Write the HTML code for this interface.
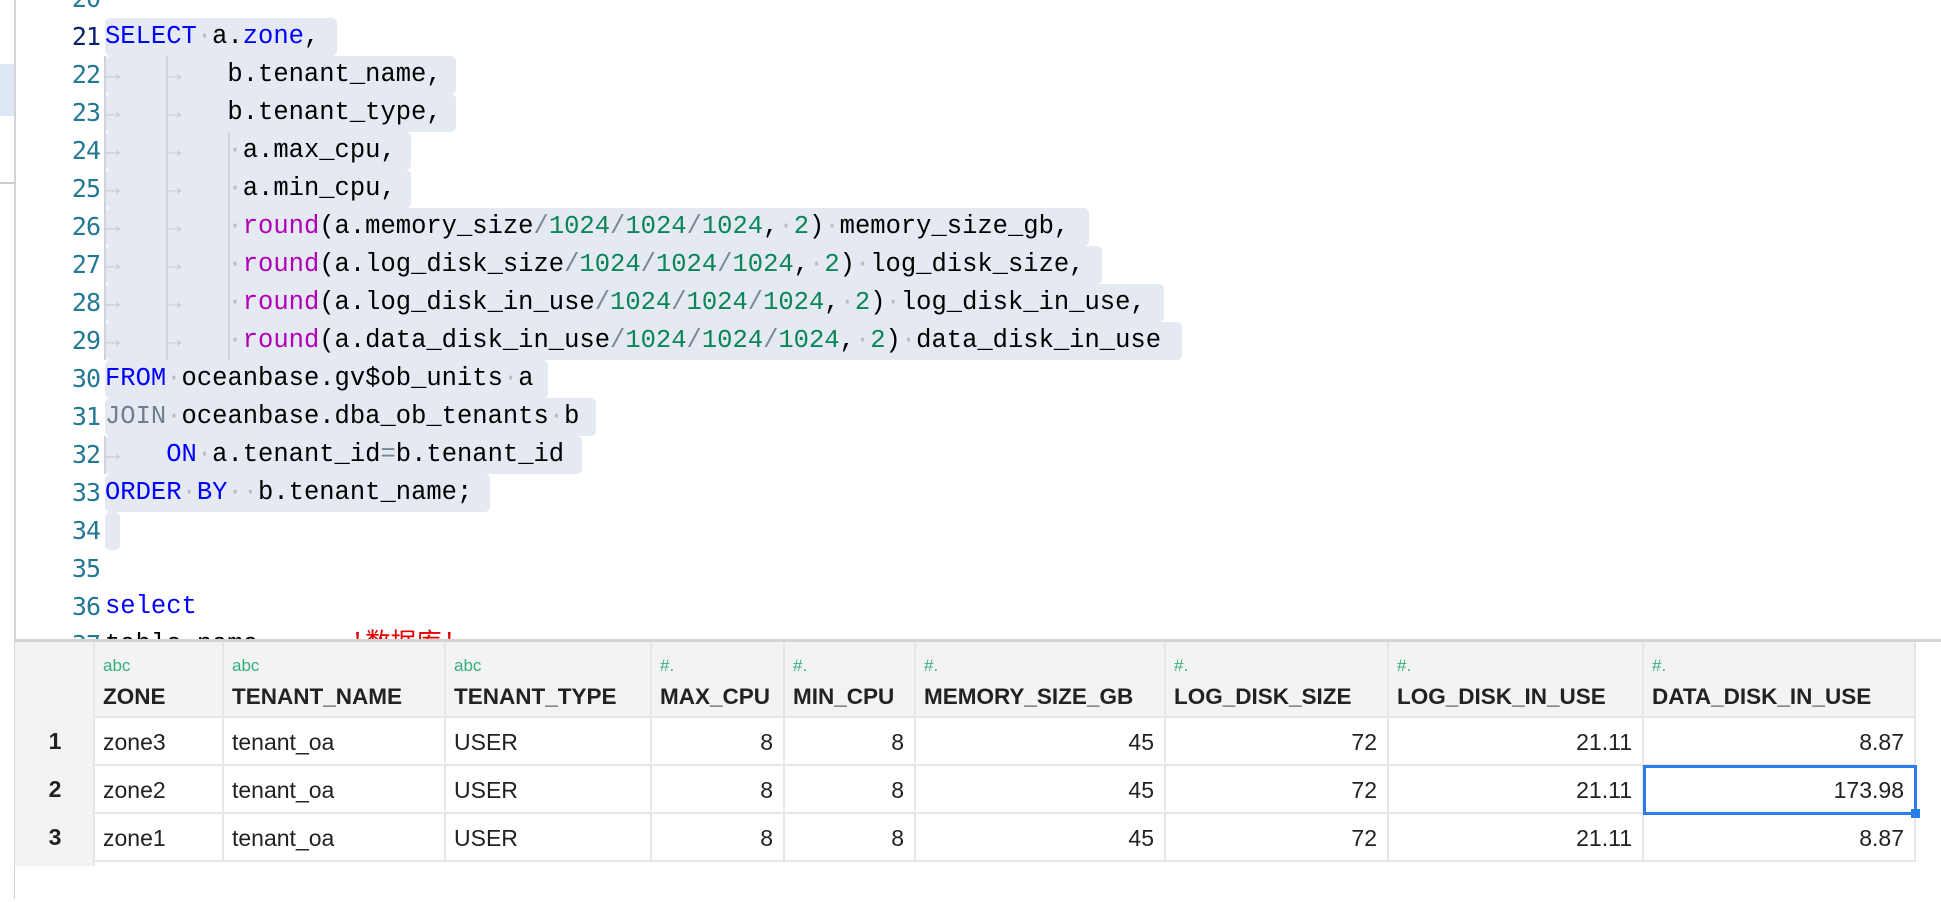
<!DOCTYPE html>
<html><head><meta charset="utf-8">
<style>
body{margin:0;width:1941px;height:899px;overflow:hidden;background:#fff;position:relative;font-family:"Liberation Sans",sans-serif}
.ln{position:absolute;left:40px;width:60px;text-align:right;font:25px/38px "DejaVu Sans Mono","Liberation Mono",monospace;color:#237893;letter-spacing:-1px}
.cl{position:absolute;left:105px;height:38px;font:25.5px/38px "Liberation Mono","DejaVu Sans Mono",monospace;white-space:pre;color:#000}
.hl{position:absolute;background:#e5e9f1;height:38px;border-radius:5px}
.k{color:#0000ff}.g{color:#708090}.f{color:#b000b8}.n{color:#098658}.o{color:#778899}.w{color:#b8bcc4}.t{color:#c8ccd2}
.guide{position:absolute;width:2px;background:#d0d3d8}
.c{position:absolute;box-sizing:border-box;border-right:2px solid #e6e6e6;border-bottom:2px solid #e6e6e6;font-size:23px;color:#222;overflow:hidden}
.h{background:#f3f3f3}
.ty{position:absolute;left:8px;top:14px;font-size:17px;color:#35b07a}
.hn{position:absolute;left:8px;bottom:6px;font-weight:bold;font-size:22.5px;color:#222;white-space:nowrap}
.v{position:absolute;top:11px;white-space:nowrap}
.r{right:10px}.l{left:8px}
</style></head><body>
<!-- gutter -->
<div style="position:absolute;left:0;top:64px;width:14px;height:52px;background:#dce8f8"></div>
<div style="position:absolute;left:0;top:182px;width:14px;height:2px;background:#ccc"></div>
<div style="position:absolute;left:14px;top:0;width:2px;height:899px;background:#d4d4d4"></div>

<!-- highlights -->
<div class="hl" style="top:18px;left:105px;width:232px"></div>
<div class="hl" style="top:56px;left:105px;width:351px"></div>
<div class="hl" style="top:94px;left:105px;width:351px"></div>
<div class="hl" style="top:132px;left:105px;width:306px"></div>
<div class="hl" style="top:170px;left:105px;width:306px"></div>
<div class="hl" style="top:208px;left:105px;width:984px"></div>
<div class="hl" style="top:246px;left:105px;width:997px"></div>
<div class="hl" style="top:284px;left:105px;width:1059px"></div>
<div class="hl" style="top:322px;left:105px;width:1077px"></div>
<div class="hl" style="top:360px;left:105px;width:443px"></div>
<div class="hl" style="top:398px;left:105px;width:491px"></div>
<div class="hl" style="top:436px;left:105px;width:477px"></div>
<div class="hl" style="top:474px;left:105px;width:385px"></div>
<div class="hl" style="top:512px;left:105px;width:15px"></div>

<div class="guide" style="left:104px;top:56px;height:304px"></div>
<div class="guide" style="left:166px;top:56px;height:304px"></div>
<div class="guide" style="left:228px;top:132px;height:228px"></div>
<div class="guide" style="left:104px;top:436px;height:38px"></div>

<!-- line numbers -->
<div class="ln" style="top:-20px">20</div>
<div class="ln" style="top:18px;color:#0b216f">21</div>
<div class="ln" style="top:56px">22</div>
<div class="ln" style="top:94px">23</div>
<div class="ln" style="top:132px">24</div>
<div class="ln" style="top:170px">25</div>
<div class="ln" style="top:208px">26</div>
<div class="ln" style="top:246px">27</div>
<div class="ln" style="top:284px">28</div>
<div class="ln" style="top:322px">29</div>
<div class="ln" style="top:360px">30</div>
<div class="ln" style="top:398px">31</div>
<div class="ln" style="top:436px">32</div>
<div class="ln" style="top:474px">33</div>
<div class="ln" style="top:512px">34</div>
<div class="ln" style="top:550px">35</div>
<div class="ln" style="top:588px">36</div>
<div class="ln" style="top:626px">37</div>

<!-- code -->
<div class="cl" style="top:18px"><span class="k">SELECT</span><span class="w">·</span>a.<span class="k">zone</span>,</div>
<div class="cl" style="top:56px"><span class="t">→   →   </span>b.tenant_name,</div>
<div class="cl" style="top:94px"><span class="t">→   →   </span>b.tenant_type,</div>
<div class="cl" style="top:132px"><span class="t">→   →   </span><span class="w">·</span>a.max_cpu,</div>
<div class="cl" style="top:170px"><span class="t">→   →   </span><span class="w">·</span>a.min_cpu,</div>
<div class="cl" style="top:208px"><span class="t">→   →   </span><span class="w">·</span><span class="f">round</span>(a.memory_size<span class="o">/</span><span class="n">1024</span><span class="o">/</span><span class="n">1024</span><span class="o">/</span><span class="n">1024</span>,<span class="w">·</span><span class="n">2</span>)<span class="w">·</span>memory_size_gb,</div>
<div class="cl" style="top:246px"><span class="t">→   →   </span><span class="w">·</span><span class="f">round</span>(a.log_disk_size<span class="o">/</span><span class="n">1024</span><span class="o">/</span><span class="n">1024</span><span class="o">/</span><span class="n">1024</span>,<span class="w">·</span><span class="n">2</span>)<span class="w">·</span>log_disk_size,</div>
<div class="cl" style="top:284px"><span class="t">→   →   </span><span class="w">·</span><span class="f">round</span>(a.log_disk_in_use<span class="o">/</span><span class="n">1024</span><span class="o">/</span><span class="n">1024</span><span class="o">/</span><span class="n">1024</span>,<span class="w">·</span><span class="n">2</span>)<span class="w">·</span>log_disk_in_use,</div>
<div class="cl" style="top:322px"><span class="t">→   →   </span><span class="w">·</span><span class="f">round</span>(a.data_disk_in_use<span class="o">/</span><span class="n">1024</span><span class="o">/</span><span class="n">1024</span><span class="o">/</span><span class="n">1024</span>,<span class="w">·</span><span class="n">2</span>)<span class="w">·</span>data_disk_in_use</div>
<div class="cl" style="top:360px"><span class="k">FROM</span><span class="w">·</span>oceanbase.gv$ob_units<span class="w">·</span>a</div>
<div class="cl" style="top:398px"><span class="g">JOIN</span><span class="w">·</span>oceanbase.dba_ob_tenants<span class="w">·</span>b</div>
<div class="cl" style="top:436px"><span class="t">→   </span><span class="k">ON</span><span class="w">·</span>a.tenant_id<span class="o">=</span>b.tenant_id</div>
<div class="cl" style="top:474px"><span class="k">ORDER</span><span class="w">·</span><span class="k">BY</span><span class="w">··</span>b.tenant_name;</div>
<div class="cl" style="top:588px"><span class="k">select</span></div>
<div class="cl" style="top:626px">table_name<span>      </span><span style="color:#e00000;font-family:'Liberation Mono','Noto Sans CJK SC',monospace">'数据库'</span></div>

<!-- table -->
<div style="position:absolute;left:15px;top:639px;width:1926px;height:260px;background:#fff;border-top:3px solid #d4d4d4"></div>
<div style="position:absolute;left:15px;top:642px">
<div class="c h" style="left:0;top:0;width:80px;height:224px;border-bottom:none"></div>
<div class="c h" style="left:80px;top:0;width:129px;height:76px"><span class="ty">abc</span><span class="hn">ZONE</span></div>
<div class="c h" style="left:209px;top:0;width:222px;height:76px"><span class="ty">abc</span><span class="hn">TENANT_NAME</span></div>
<div class="c h" style="left:431px;top:0;width:206px;height:76px"><span class="ty">abc</span><span class="hn">TENANT_TYPE</span></div>
<div class="c h" style="left:637px;top:0;width:133px;height:76px"><span class="ty">#.</span><span class="hn">MAX_CPU</span></div>
<div class="c h" style="left:770px;top:0;width:131px;height:76px"><span class="ty">#.</span><span class="hn">MIN_CPU</span></div>
<div class="c h" style="left:901px;top:0;width:250px;height:76px"><span class="ty">#.</span><span class="hn">MEMORY_SIZE_GB</span></div>
<div class="c h" style="left:1151px;top:0;width:223px;height:76px"><span class="ty">#.</span><span class="hn">LOG_DISK_SIZE</span></div>
<div class="c h" style="left:1374px;top:0;width:255px;height:76px"><span class="ty">#.</span><span class="hn">LOG_DISK_IN_USE</span></div>
<div class="c h" style="left:1629px;top:0;width:272px;height:76px"><span class="ty">#.</span><span class="hn">DATA_DISK_IN_USE</span></div>
</div>
<div id="rows" style="position:absolute;left:15px;top:718px"></div>
<script>
var cols=[[80,129,'l'],[209,222,'l'],[431,206,'l'],[637,133,'r'],[770,131,'r'],[901,250,'r'],[1151,223,'r'],[1374,255,'r'],[1629,272,'r']];
var data=[['zone3','tenant_oa','USER','8','8','45','72','21.11','8.87'],['zone2','tenant_oa','USER','8','8','45','72','21.11','173.98'],['zone1','tenant_oa','USER','8','8','45','72','21.11','8.87']];
var h='';
for(var i=0;i<3;i++){var t=i*48;
h+='<div style="position:absolute;left:0;top:'+(t+10)+'px;width:80px;text-align:center;font-weight:bold;font-size:23px;color:#222">'+(i+1)+'</div>';
for(var j=0;j<9;j++){h+='<div class="c" style="left:'+cols[j][0]+'px;top:'+t+'px;width:'+cols[j][1]+'px;height:48px"><span class="v '+cols[j][2]+'">'+data[i][j]+'</span></div>';}}
h+='<div style="position:absolute;left:1628px;top:47px;width:274px;height:50px;box-sizing:border-box;border:3px solid #2b7de9"></div>';
h+='<div style="position:absolute;left:1896px;top:91px;width:9px;height:9px;background:#2b7de9"></div>';
document.getElementById('rows').innerHTML=h;
</script>
</body></html>
